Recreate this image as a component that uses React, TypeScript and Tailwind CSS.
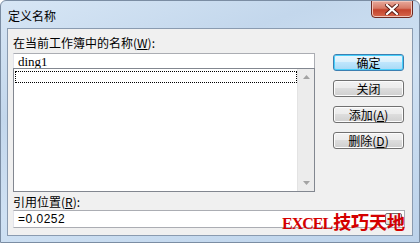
import React from "react";

const cjk = '"Noto Sans CJK SC", "Noto Sans", sans-serif';

function Btn({ children, primary = false }: { children: React.ReactNode; primary?: boolean }) {
  return (
    <div
      className={
        "w-[71px] h-[17px] rounded-[3px] border flex items-center justify-center text-[12px] leading-none text-black " +
        (primary
          ? "border-[#3c7fb1] bg-[linear-gradient(to_bottom,#eaf6fd_0%,#d9f0fc_50%,#bee6fd_50%,#a7d9f5_100%)] shadow-[inset_0_0_0_1px_#48d0fb]"
          : "border-[#707070] bg-[linear-gradient(to_bottom,#f2f2f2_0%,#ebebeb_50%,#dddddd_50%,#cfcfcf_100%)] shadow-[inset_0_0_0_1px_#fcfcfc]")
      }
      style={{ fontFamily: cjk }}
    >
      {children}
    </div>
  );
}

export default function App() {
  return (
    <div
      className="relative w-[420px] h-[243px] overflow-hidden flex flex-col bg-[linear-gradient(160deg,#d7e6f5_0%,#c3d7ec_30%,#cfe1f3_55%,#bcd2ea_100%)] border border-[#7b8da3] rounded-t-[6px]"
      style={{ fontFamily: cjk }}
    >
      {/* title bar */}
      <div className="h-[27px] flex items-start justify-between">
        <div className="pl-[7px] pt-[8px] text-[12px] leading-[14px] text-black">定义名称</div>
        <div className="mr-[6px] mt-[-1px] w-[42px] h-[18px] rounded-b-[4px] border border-[#6e2a22] bg-[linear-gradient(to_bottom,#e8a99c_0%,#d77a66_45%,#c4432c_55%,#d6664c_100%)] shadow-[inset_0_0_0_1px_#f2c4b8] flex items-center justify-center">
          <svg width="14" height="11" viewBox="0 0 14 11">
            <path d="M2 1 L12 10 M12 1 L2 10" stroke="#5a1d16" strokeWidth="4" strokeLinecap="square" />
            <path d="M2 1 L12 10 M12 1 L2 10" stroke="#ffffff" strokeWidth="2.2" strokeLinecap="square" />
          </svg>
        </div>
      </div>

      {/* client area */}
      <div className="mx-[6px] mb-[6px] flex-1 bg-[#f0f0f0] border border-[#8a9bb0] flex flex-col pl-[5px] pr-[7px]">
        <div className="flex gap-[18px]">
          <div className="w-[302px] flex flex-col">
            <div className="pt-[7px] h-[21px] text-[12px] leading-[14px] text-black whitespace-nowrap">
              在当前工作簿中的名称(<span className="underline">W</span>):
            </div>
            <div className="mt-[3px] h-[15px] bg-white border border-b-0 border-[#abadb3] border-l-[#e2e3ea] pl-[4px] flex items-center">
              <span className="text-[13px] leading-none text-black" style={{ fontFamily: '"Liberation Serif", serif' }}>
                ding1
              </span>
            </div>
            <div className="h-[124px] bg-white border border-[#828790] flex">
              <div className="flex-1 pl-[1px] pt-[2px]">
                <div className="h-[12px] border border-dotted border-black" />
              </div>
              <div className="w-[17px] bg-[#ececec] border-l border-[#e3e3e3] flex flex-col justify-between items-center py-[6px]">
                <svg width="7" height="4" viewBox="0 0 7 4">
                  <path d="M0 4 L3.5 0 L7 4 Z" fill="#a3a3a3" />
                </svg>
                <svg width="7" height="4" viewBox="0 0 7 4">
                  <path d="M0 0 L3.5 4 L7 0 Z" fill="#a3a3a3" />
                </svg>
              </div>
            </div>
          </div>
          <div className="flex flex-col gap-[9px] pt-[25px]">
            <Btn primary>确定</Btn>
            <Btn>关闭</Btn>
            <Btn>
              添加(<span className="underline">A</span>)
            </Btn>
            <Btn>
              删除(<span className="underline">D</span>)
            </Btn>
          </div>
        </div>
        <div className="mt-[3px] h-[14px] text-[12px] leading-[14px] text-black">
          引用位置(<span className="underline">R</span>):
        </div>
        <div className="mt-[1px] h-[18px] bg-white border border-[#abadb3] border-l-[#e2e3ea] flex items-center justify-between pl-[4px] pr-[2px]">
          <span className="text-[12px] leading-none text-black tracking-[0.5px]" style={{ fontFamily: '"Liberation Sans", sans-serif' }}>
            =0.0252
          </span>
          <div className="w-[17px] h-[12px] border border-[#707070] rounded-[2px] bg-[linear-gradient(to_bottom,#f4f4f4,#dcdcdc)]" />
        </div>
      </div>

      {/* watermark */}
      <div className="absolute left-[281px] top-[207px] flex items-baseline text-[#d40000] font-bold whitespace-nowrap">
        <span className="text-[16px] tracking-[-1px]" style={{ fontFamily: '"Liberation Serif", serif' }}>
          EXCEL
        </span>
        <span className="text-[18px] ml-[1px]" style={{ fontFamily: cjk }}>
          技巧天地
        </span>
      </div>
    </div>
  );
}
